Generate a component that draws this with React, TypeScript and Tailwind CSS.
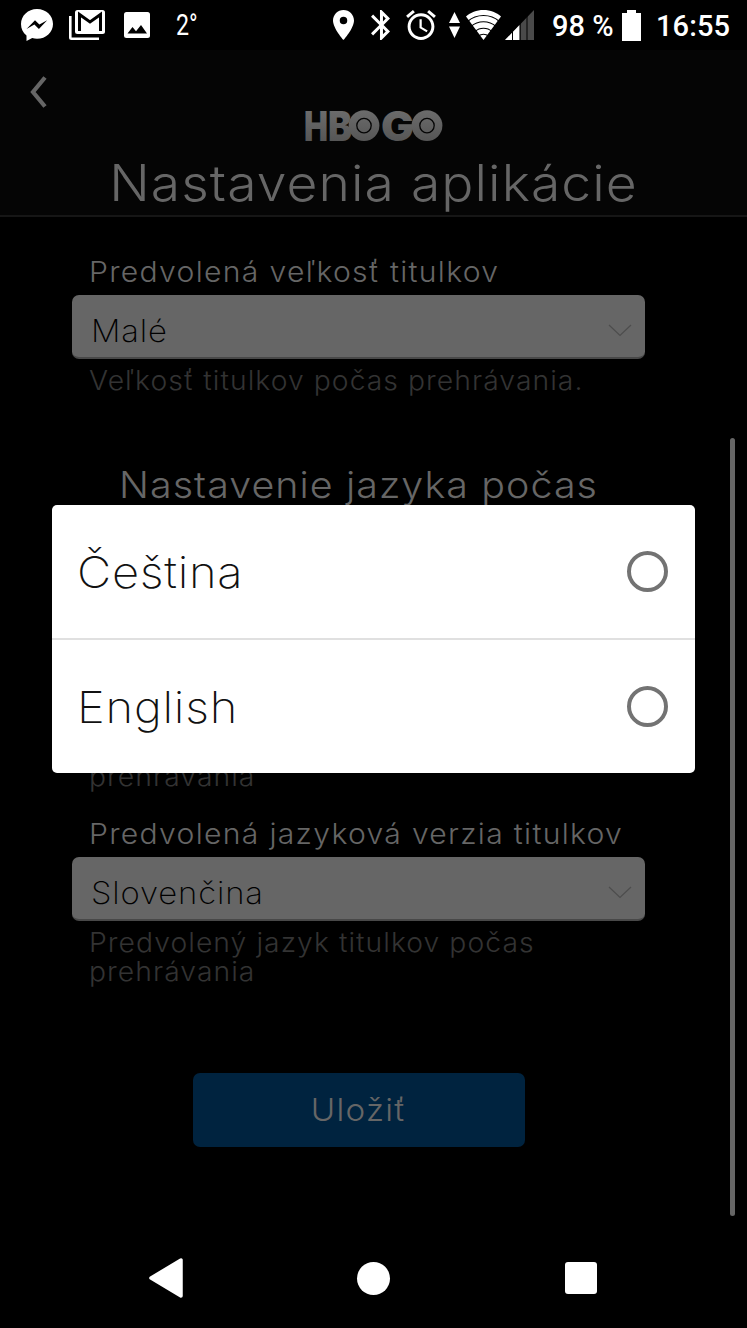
import type { ReactNode } from "react";

const StatusBar = () => {
  return (
    <div className="flex h-[50px] shrink-0 items-center bg-black pl-[21px] text-white font-['Roboto',sans-serif]">
      {/* Messenger */}
      <svg className="h-8 w-8 shrink-0" viewBox="0 0 32 32">
        <path d="M16 0C7 0 0 6.700 0 15c0 4.700 2 8.800 5.500 11.500V32l5.700-3c1.500.5 3.100.7 4.800.7 9 0 16-6.600 16-14.800S25 0 16 0z" fill="#fff" />
        <path d="M5.500 20l8.500-8.800 4.400 4.400 7.800-4.400-8.300 8.800-4.500-4.500z" fill="#000" />
      </svg>

      {/* Gmail */}
      <svg className="ml-4 h-[30px] w-9 shrink-0" viewBox="0 0 36 30">
        <path d="M1.300 6v21.500a1.200 1.200 0 0 0 1.200 1.200H30" fill="none" stroke="#fff" strokeWidth="2.600" />
        <rect x="6" width="30" height="24" rx="2.500" fill="#fff" />
        <path d="M10.500 21V4.500L21 12l10.500-7.500V21" fill="none" stroke="#000" strokeWidth="3" />
      </svg>

      {/* Picture */}
      <svg className="ml-[19px] h-[26px] w-[26px] shrink-0" viewBox="0 0 26 26">
        <rect width="26" height="26" rx="2.500" fill="#fff" />
        <path d="M3.500 21.500l5-6.500 3.500 4.200 5-6.200 6 8.500z" fill="#000" />
      </svg>

      <span className="ml-[26px] w-[22px] origin-left scale-x-[0.8] text-[29px] leading-[50px] whitespace-nowrap">2°</span>

      {/* Location */}
      <svg className="ml-[135px] h-[30px] w-[21px] shrink-0" viewBox="5 2 14 20" fill="#fff">
        <path d="M12 2C8.130 2 5 5.130 5 9c0 5.250 7 13 7 13s7-7.750 7-13c0-3.870-3.130-7-7-7zm0 9.500a2.500 2.500 0 1 1 0-5 2.500 2.500 0 0 1 0 5z" />
      </svg>

      {/* Bluetooth */}
      <svg className="ml-[17px] h-[30px] w-[19px] shrink-0" viewBox="5 2 12.700 20" fill="#fff">
        <path d="M17.710 7.710L12 2h-1v7.590L6.410 5 5 6.410 10.590 12 5 17.590 6.410 19 11 14.410V22h1l5.710-5.710-4.300-4.290 4.300-4.290zM13 5.830l1.880 1.880L13 9.590V5.830zm1.880 10.460L13 18.170v-3.760l1.880 1.880z" />
      </svg>

      {/* Alarm */}
      <svg className="ml-4 h-[30px] w-[30px] shrink-0" viewBox="2 1.860 20 20.140" fill="#fff">
        <path d="M22 5.720l-4.600-3.860-1.290 1.530 4.600 3.860L22 5.720zM7.880 3.390L6.600 1.860 2 5.710l1.290 1.530 4.590-3.850zM12.500 8H11v6l4.750 2.850.75-1.230-4-2.370V8zM12 4c-4.970 0-9 4.030-9 9s4.020 9 9 9c4.970 0 9-4.030 9-9s-4.030-9-9-9zm0 16c-3.870 0-7-3.130-7-7s3.130-7 7-7 7 3.130 7 7-3.130 7-7 7z" />
      </svg>

      {/* Data arrows */}
      <svg className="ml-[13px] h-[26px] w-[11px] shrink-0" viewBox="0 0 11 26" fill="#fff">
        <path d="M5.500 0L11 11H0zM0 14.500h11L5.500 26z" />
      </svg>

      {/* Wi-Fi */}
      <svg className="ml-[6px] h-[30px] w-[35px] shrink-0" viewBox="0 0 35 30">
        <path d="M17.500 30L0 6.500C4.500 2.500 10.500 0 17.500 0S30.500 2.500 35 6.500z" fill="#fff" />
        <path d="M1.500 11.500C6 7.500 11 5.500 17.500 5.500s11.500 2 16 6M5 16.500c3.500-3.200 7.500-4.800 12.500-4.800s9 1.600 12.500 4.800M9 21.500c2.500-2.300 5-3.300 8.500-3.300s6 1 8.500 3.300M12.500 26c1.500-1.300 3-1.800 5-1.800s3.500.5 5 1.800" fill="none" stroke="#000" strokeWidth="1.100" />
      </svg>

      {/* Signal */}
      <svg className="ml-1 h-[30px] w-[29px] shrink-0" viewBox="0 0 29 30">
        <path d="M0 30L29 0v30z" fill="#4a4a4a" />
        <path d="M0 30L14.500 15v15z" fill="#fff" />
        <path d="M7.500 20v10M15.200 12v18M22 5v25" stroke="#000" strokeWidth="1" />
      </svg>

      <span className="ml-[18px] w-[63px] pt-[2px] text-[29px] leading-[48px] font-medium whitespace-nowrap">98 %</span>

      {/* Battery */}
      <svg className="ml-[7px] h-[31px] w-[19px] shrink-0" viewBox="0 0 19 31">
        <path d="M5 0h9v3h5v28H0V3h5z" fill="#fff" />
      </svg>

      <span className="ml-[15px] pt-[2px] text-[29px] leading-[48px] font-medium tracking-[0.1px] whitespace-nowrap">16:55</span>
    </div>
  );
};

const Logo = () => {
  return (
    <svg className="mt-[60px] h-8 w-[138px] overflow-visible" viewBox="0 0 138 32" aria-label="HBO GO">
      <defs>
        <linearGradient id="steel" gradientUnits="userSpaceOnUse" x1="0" y1="0" x2="0" y2="32">
          <stop offset="0" stopColor="#6c6c6c" />
          <stop offset="1" stopColor="#555" />
        </linearGradient>
      </defs>
      <g fill="url(#steel)" fontFamily="Inter, sans-serif" fontWeight="900" fontSize="41">
        <text x="-1" y="30.500" textLength="24" lengthAdjust="spacingAndGlyphs">H</text>
        <text x="23" y="30.500" textLength="24" lengthAdjust="spacingAndGlyphs">B</text>
        <text x="76" y="30.500" textLength="33" lengthAdjust="spacingAndGlyphs">G</text>
        <circle cx="59" cy="15.600" r="15.400" />
        <circle cx="122" cy="15.600" r="15.400" />
      </g>
      <g fill="none" stroke="#050505" strokeWidth="1.300">
        <circle cx="59" cy="15.600" r="7.200" />
        <circle cx="122" cy="15.600" r="7.200" />
      </g>
    </svg>
  );
};

const Header = () => {
  return (
    <header className="flex h-[167px] shrink-0 flex-col items-center border-b-2 border-[#161616] bg-[#050505]">
      <div className="flex w-full">
        <svg className="mt-[26px] ml-[30px] h-8 w-[17px]" viewBox="0 0 17 32">
          <path d="M15 1.500L3 16 15 30.500" fill="none" stroke="#666" strokeWidth="4.200" />
        </svg>
        <div className="ml-[258px]">
          <Logo />
        </div>
      </div>
      <h1 className="mt-[11px] scale-x-[1.068] text-[50px] leading-[60px] font-light tracking-[1px] whitespace-nowrap text-[#666]">
        Nastavenia aplikácie
      </h1>
    </header>
  );
};

const Select = ({ value }: { value: string }) => {
  return (
    <div className="mt-[6px] flex h-16 items-center justify-between rounded-[7px] border-b-2 border-[#484848] bg-[#666] pr-[13px] pl-[19px]">
      <span className="origin-left scale-x-[1.06] pt-[10px] text-[31px] leading-[40px] font-extralight tracking-[0.8px] text-black">
        {value}
      </span>
      <svg className="mt-2 h-[13px] w-6" viewBox="0 0 24 13">
        <path d="M1 1l11 10.500L23 1" fill="none" stroke="#4d4d4d" strokeWidth="1.200" />
      </svg>
    </div>
  );
};

const Hint = ({ children }: { children: ReactNode }) => {
  return (
    <p className="ml-[17px] origin-left scale-x-[1.048] text-[27px] leading-[29px] font-light tracking-[1px] whitespace-nowrap text-[#333]">
      {children}
    </p>
  );
};

const Label = ({ children }: { children: ReactNode }) => {
  return (
    <p className="ml-[17px] origin-left scale-x-[1.076] text-[28px] leading-[34px] font-light tracking-[1.2px] whitespace-nowrap text-[#666]">
      {children}
    </p>
  );
};

const Option = ({ name }: { name: string }) => {
  return (
    <div className="flex h-[133px] items-center justify-between pr-[27px] pl-[25px]">
      <span className="origin-left scale-x-[1.07] text-[44px] leading-[54px] font-extralight tracking-[0.7px] text-[#111]">{name}</span>
      <span className="h-[41px] w-[41px] rounded-full border-4 border-[#737373]" />
    </div>
  );
};

const App = () => {
  return (
    <div className="relative flex h-[1328px] w-[747px] flex-col overflow-hidden bg-black font-['Inter',sans-serif]">
      <StatusBar />
      <Header />

      <main className="flex flex-1">
        <div className="w-[573px] pt-[38px] ml-[72px]">
          <Label>Predvolená veľkosť titulkov</Label>
          <Select value="Malé" />
          <div className="mt-[7px]">
            <Hint>Veľkosť titulkov počas prehrávania.</Hint>
          </div>

          <h2 className="mt-[69px] h-[298px] scale-x-[1.065] text-center text-[37px] leading-[42px] font-light tracking-[1px] whitespace-nowrap text-[#666]">
            Nastavenie jazyka počas
          </h2>

          <Hint>prehrávania</Hint>
          <div className="mt-[26px]">
            <Label>Predvolená jazyková verzia titulkov</Label>
          </div>
          <Select value="Slovenčina" />
          <div className="mt-[7px]">
            <Hint>
              Predvolený jazyk titulkov počas
              <br />
              prehrávania
            </Hint>
          </div>

          <button className="mx-auto mt-[87px] block h-[74px] w-[332px] rounded-[7px] bg-[#00233f] text-[31px] font-light text-[#666]">
            <span className="inline-block scale-x-[1.07] tracking-[1.200px]">Uložiť</span>
          </button>
        </div>

        {/* Scrollbar */}
        <div className="mt-[221px] ml-[85px] h-[778px] w-[5px] rounded-full bg-[#666]" />
      </main>

      {/* System navigation */}
      <nav className="flex h-[100px] shrink-0 items-center">
        <svg className="ml-[148px] h-[42px] w-[36px]" viewBox="0 0 36 42">
          <path d="M3 21L33 3v36z" fill="#fff" stroke="#fff" strokeWidth="3.500" strokeLinejoin="round" />
        </svg>
        <span className="ml-[173px] h-[33px] w-[33px] rounded-full bg-white" />
        <span className="ml-[175px] h-8 w-8 rounded-[3px] bg-white" />
      </nav>

      {/* Language picker */}
      <div role="dialog" className="absolute top-[505px] left-[52px] w-[643px] overflow-hidden rounded-[5px] bg-white">
        <Option name="Čeština" />
        <div className="h-[2px] bg-[#e0e0e0]" />
        <Option name="English" />
      </div>
    </div>
  );
};

export default App;
